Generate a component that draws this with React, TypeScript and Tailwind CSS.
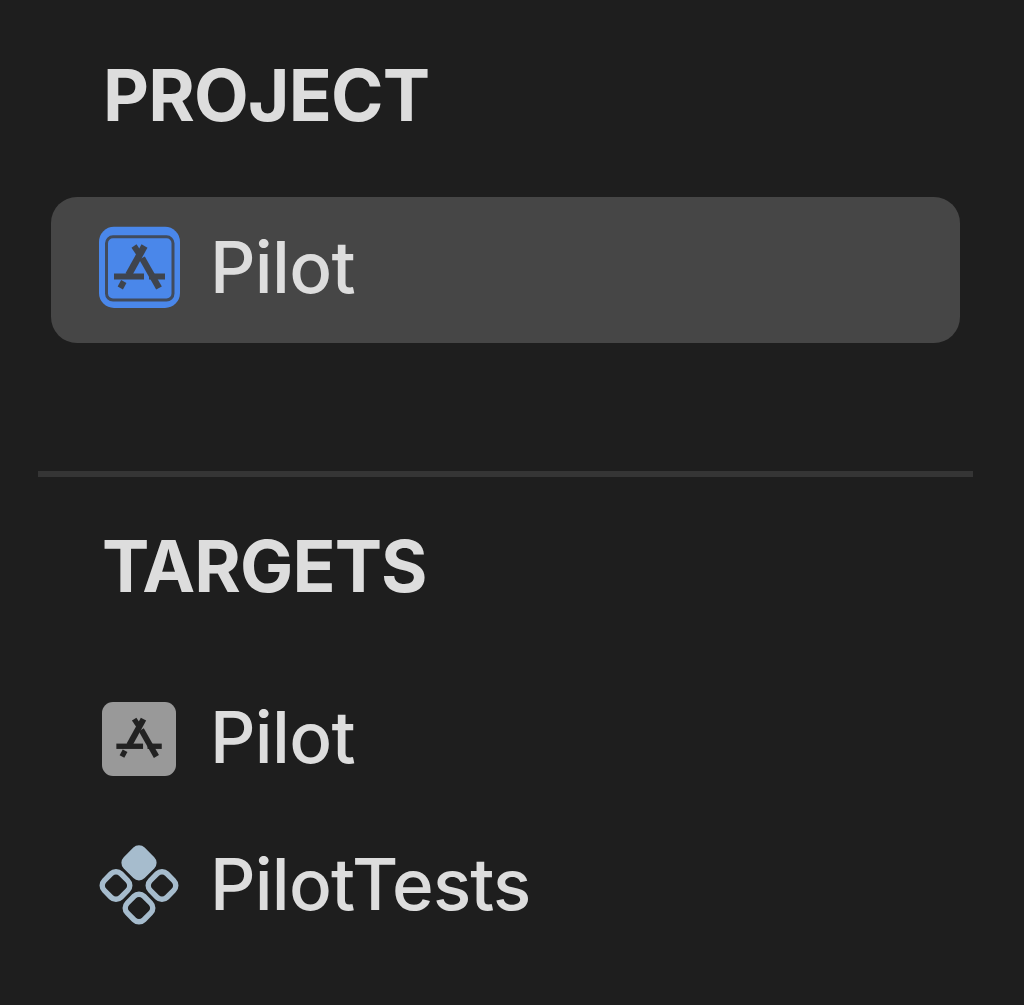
type GlyphProps = { color: string; transform?: string };

function StoreGlyph({ color, transform }: GlyphProps) {
  return (
    <g transform={transform} stroke={color} strokeWidth="6" fill="none">
      <path d="M44 28 L50 37" />
      <path d="M54.5 28 L38.5 57" strokeWidth="6.8" />
      <path d="M52 40 L69 70" strokeWidth="6.5" />
      <path d="M24 58.5 H54" />
      <path d="M59 58.5 H75" />
      <path d="M33.8 63.5 L30.3 70" />
    </g>
  );
}

function ProjectIcon() {
  return (
    <svg className="-mt-[4px] size-[100px] shrink-0" viewBox="0 0 100 100">
      <rect x="9" y="8.8" width="81" height="81.2" rx="15" fill="#4a87ea" />
      <rect x="16.5" y="18.8" width="66.5" height="63.2" rx="6.5" fill="none" stroke="#414b5c" strokeWidth="3" />
      <StoreGlyph color="#3f444d" />
    </svg>
  );
}

function AppIcon() {
  return (
    <svg className="size-[100px] shrink-0" viewBox="0 0 100 100">
      <rect x="12" y="12" width="74" height="74" rx="11" fill="#999999" />
      <StoreGlyph color="#222222" transform="translate(5 4.2) scale(.89 .89)" />
    </svg>
  );
}

function TestsIcon() {
  return (
    <svg className="-mt-[2px] size-[100px] shrink-0" viewBox="0 0 100 100">
      <g fill="none" stroke="#a6bccd" strokeWidth="5.4">
        <rect x="-11.8" y="-11.8" width="23.6" height="23.6" rx="7" transform="translate(26 50.5) rotate(45)" />
        <rect x="-11.8" y="-11.8" width="23.6" height="23.6" rx="7" transform="translate(72 50.5) rotate(45)" />
        <rect x="-11.8" y="-11.8" width="23.6" height="23.6" rx="7" transform="translate(49 73) rotate(45)" />
      </g>
      <rect x="-14.8" y="-14.8" width="29.6" height="29.6" rx="8" fill="#a6bccd" transform="translate(49 27.8) rotate(45)" />
    </svg>
  );
}

export default function App() {
  return (
    <div className="h-[1005px] w-[1024px] overflow-hidden bg-[#1e1e1e] font-['Inter',sans-serif] text-[71px] leading-[86px] text-[#dddddd]">
      <section className="flex h-[471px] flex-col pt-[52px]">
        <h2 className="ml-[103px] w-fit font-bold tracking-[-0.8px] whitespace-nowrap">PROJECT</h2>
        <div className="mt-[59px] ml-[51px] flex h-[146px] w-[909px] items-center rounded-[26px] bg-[#464646] pl-[39px]">
          <ProjectIcon />
          <span className="-mt-[6px] ml-[20px] font-medium tracking-[-0.7px] whitespace-nowrap">Pilot</span>
        </div>
      </section>
      <hr className="ml-[38px] h-[6px] w-[935px] border-0 bg-[#353535]" />
      <section className="pt-[46px]">
        <h2 className="ml-[102px] w-fit font-bold tracking-[-0.9px] whitespace-nowrap">TARGETS</h2>
        <ul className="mt-[58px]">
          <li className="flex h-[146px] items-center pl-[90px]">
            <AppIcon />
            <span className="-mt-[6px] ml-[20px] font-medium tracking-[-0.7px] whitespace-nowrap">Pilot</span>
          </li>
          <li className="flex h-[146px] items-center pl-[90px]">
            <TestsIcon />
            <span className="-mt-[4px] ml-[20px] font-medium tracking-[-0.8px] whitespace-nowrap">PilotTests</span>
          </li>
        </ul>
      </section>
    </div>
  );
}
